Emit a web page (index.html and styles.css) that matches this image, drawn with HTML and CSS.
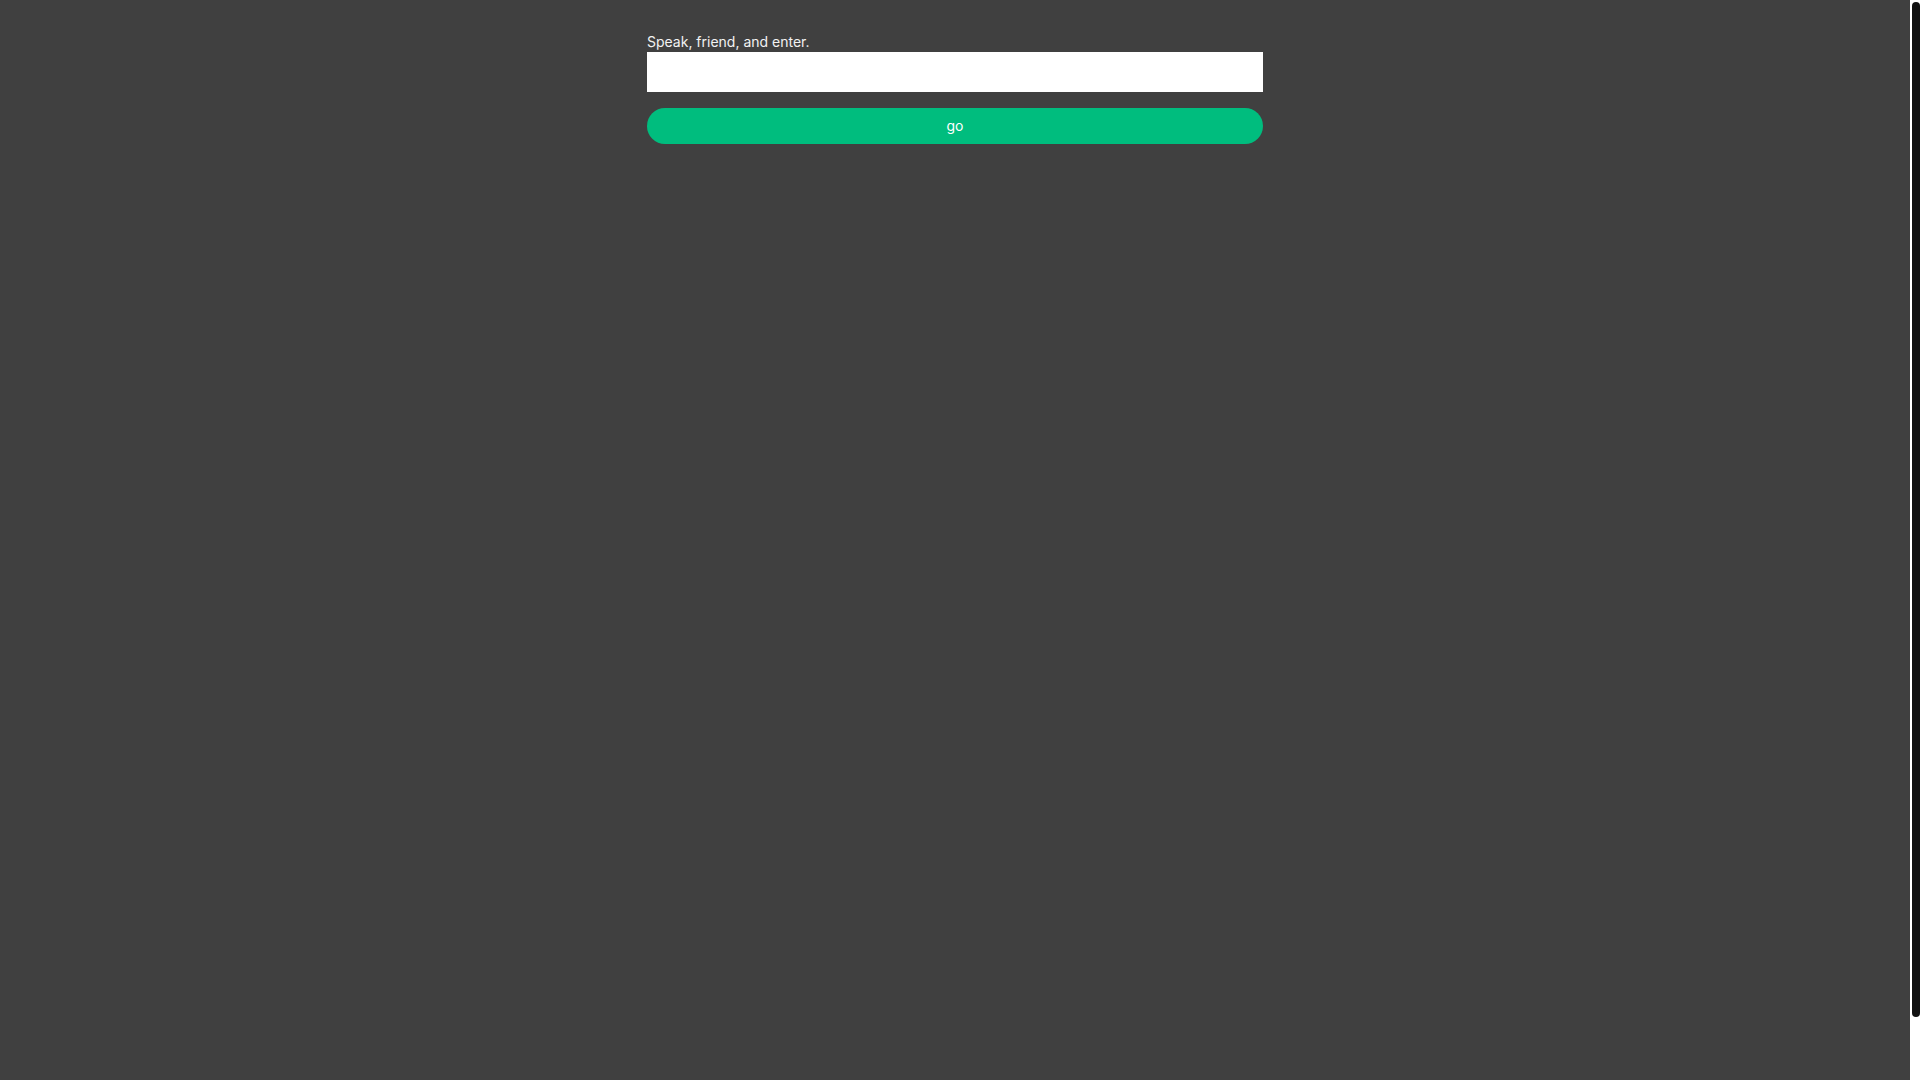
FILE: index.html
```html
<!DOCTYPE html>
<html lang="en">
<head>
<meta charset="utf-8">
<title>Speak, friend, and enter</title>
<link rel="stylesheet" href="styles.css">
</head>
<body>
<div class="frame">
  <main class="page">
    <form class="gate">
      <label class="gate-label" for="word">Speak, friend, and enter.</label>
      <input class="gate-input" id="word" type="text">
      <button class="gate-button" type="button">go</button>
    </form>
  </main>
  <div class="scroll-track" aria-hidden="true">
    <div class="scroll-thumb"></div>
  </div>
</div>
</body>
</html>
```
FILE: styles.css
```css
html,
body {
  margin: 0;
  height: 100%;
  overflow: hidden;
  background: #404040;
}
body {
  font-family: Inter, "Liberation Sans", sans-serif;
  color: #f0f0f0;
}
.frame {
  height: 100vh;
  display: grid;
  grid-template-columns: 1fr 10px;
}
.page {
  padding-top: 32px;
  background: #404040;
}
.gate {
  width: 616px;
  margin: 0 auto;
  display: flex;
  flex-direction: column;
}
.gate-label {
  font-size: 14px;
  line-height: 20px;
  color: #f2f2f2;
}
.gate-input {
  height: 40px;
  box-sizing: border-box;
  border: none;
  background: #ffffff;
  margin: 0;
  padding: 0 10px;
  font-family: inherit;
  font-size: 14px;
  outline: none;
}
.gate-button {
  margin-top: 16px;
  height: 36px;
  border: none;
  border-radius: 18px;
  background: #00bd7e;
  color: #ffffff;
  font-family: Inter, "Liberation Sans", sans-serif;
  font-size: 14px;
  padding: 0 0 2px;
  cursor: pointer;
}
.scroll-track {
  background: #ffffff;
  padding: 2px 0 0 2px;
}
.scroll-thumb {
  height: 1015px;
  background: #111111;
  border-radius: 4px;
}
```
